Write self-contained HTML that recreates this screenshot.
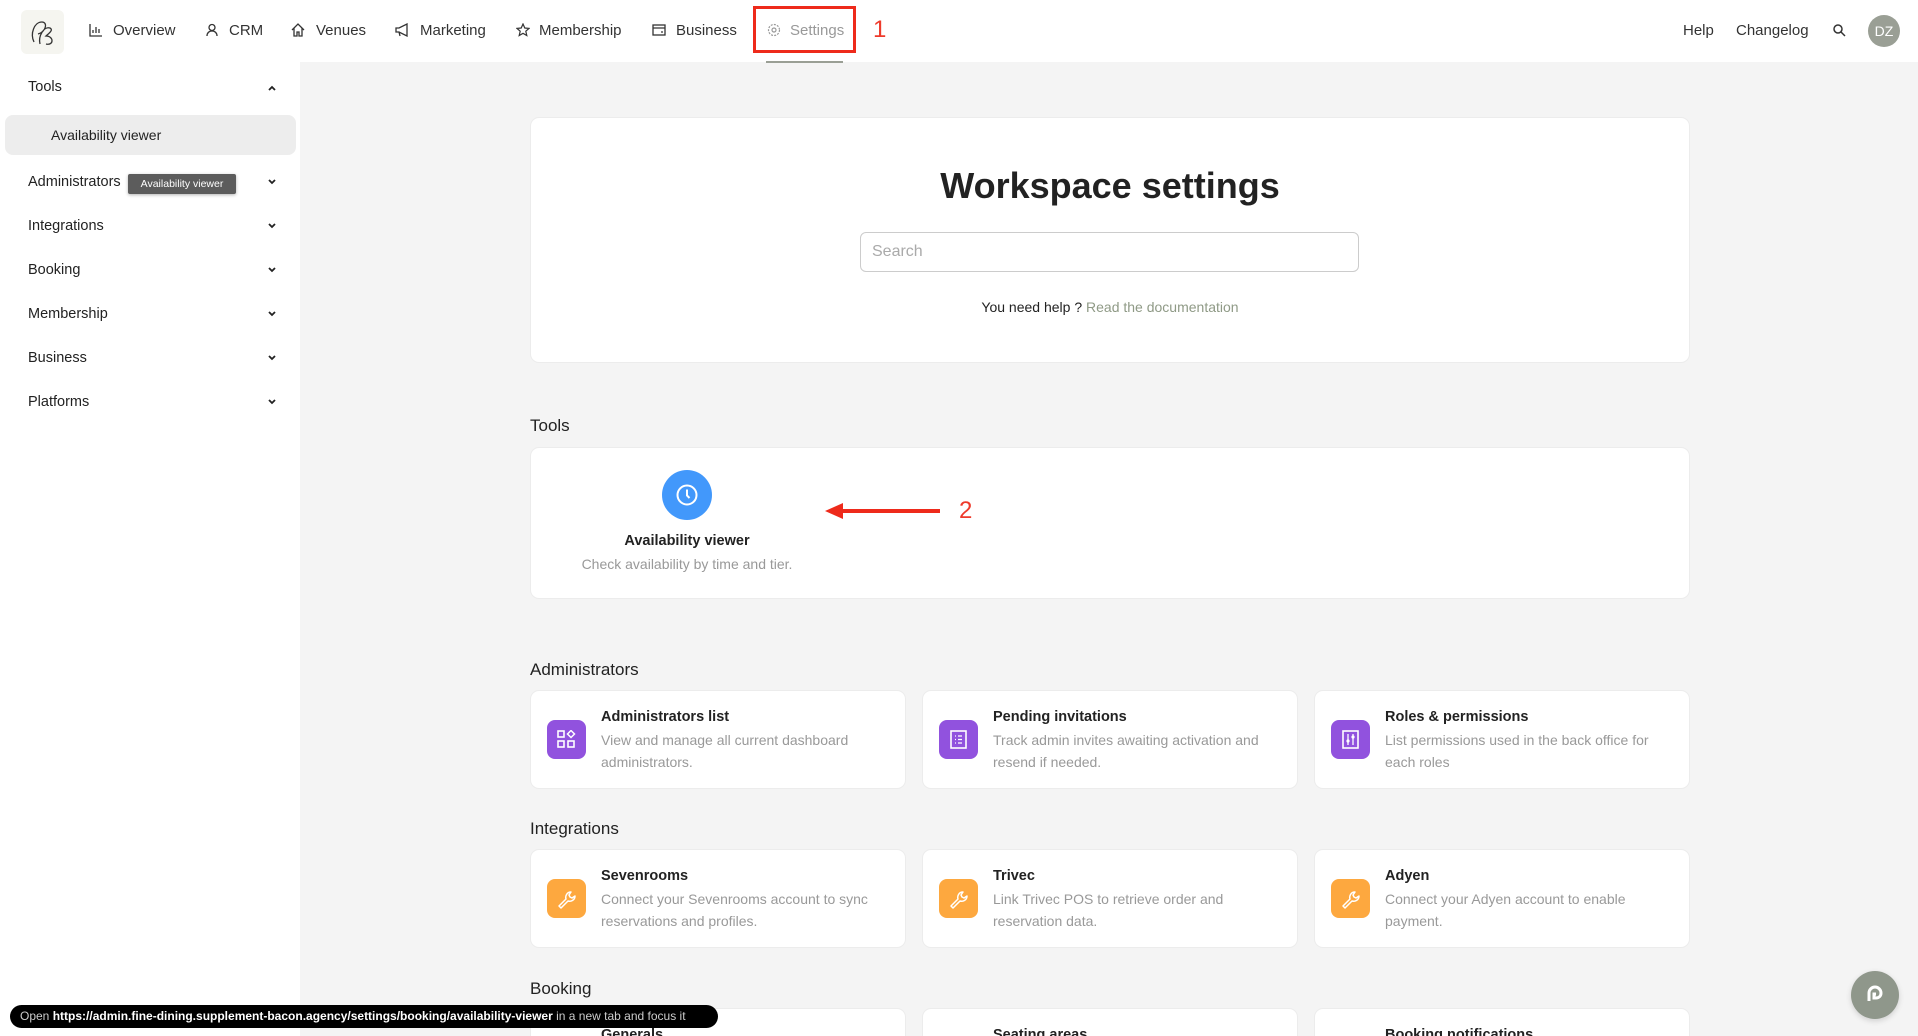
<!DOCTYPE html>
<html style="width:1918px;height:1036px;overflow:hidden"><head><meta charset="utf-8"><style>
*{box-sizing:border-box;margin:0;padding:0}
body{width:1918px;height:1036px;overflow:hidden;background:#f4f4f4;font-family:"Liberation Sans",sans-serif;color:#222;position:relative}
.a{position:absolute}
.top{left:0;top:0;width:1918px;height:62px;background:#fff}
.side{left:0;top:62px;width:300px;height:974px;background:#fff}
.nav{font-size:15px;color:#333;top:22px;white-space:nowrap}
.ni{top:23px;width:14px;height:14px}
.sb{font-size:14.5px;color:#222;left:28px}
.chev{left:267px;width:10px;height:10px}
.card{background:#fff;border-radius:8px;box-shadow:0 0 0 1px #ececec}
.h2{font-size:17px;color:#222;left:530px}
.ic{width:39px;height:39px;border-radius:8px;left:16px;top:29px}
.ct{left:70px;top:18px;font-size:14.5px;font-weight:bold;color:#222;white-space:nowrap}
.cd{left:70px;top:38px;font-size:14px;color:#999;line-height:22px;width:290px}
</style></head><body>
<div class="a top"></div>
<div class="a" style="left:21px;top:10px;width:43px;height:44px;background:#f5f5f0;border-radius:6px"></div>
<svg class="a" style="left:24px;top:14px" width="38" height="36" viewBox="0 0 38 36"><path d="M10 28 C6 20 10 8 18 8 C24 8 22 18 14 20 M16 30 C14 22 20 12 26 14 C30 16 24 20 22 22 C30 22 30 32 22 30" fill="none" stroke="#333" stroke-width="1.3"/></svg>
<svg class="a ni" style="left:89px" viewBox="0 0 14 14"><path d="M1 1v12h12M4 10V7M7 10V4M10 10V6" stroke="#333" fill="none" stroke-width="1.3"/></svg>
<div class="a nav" style="left:113px">Overview</div>
<svg class="a ni" style="left:205px" viewBox="0 0 14 14"><circle cx="7" cy="4.5" r="3" stroke="#333" fill="none" stroke-width="1.3"/><path d="M2 13c0-3 2-5 5-5s5 2 5 5" stroke="#333" fill="none" stroke-width="1.3"/></svg>
<div class="a nav" style="left:229px">CRM</div>
<svg class="a ni" style="left:291px" viewBox="0 0 14 14"><path d="M1 7L7 1l6 6M3 5v8h3V9h2v4h3V5" stroke="#333" fill="none" stroke-width="1.3"/></svg>
<div class="a nav" style="left:316px">Venues</div>
<svg class="a ni" style="left:395px" viewBox="0 0 14 14"><path d="M1 5h3l8-4v12L4 9H1zM4 9l1 4" stroke="#333" fill="none" stroke-width="1.3"/></svg>
<div class="a nav" style="left:420px">Marketing</div>
<svg class="a ni" style="left:516px" viewBox="0 0 14 14"><path d="M7 1l1.8 4 4.2.4-3.2 2.8 1 4.3L7 10.3 3.2 12.5l1-4.3L1 5.4 5.2 5z" stroke="#333" fill="none" stroke-width="1.2"/></svg>
<div class="a nav" style="left:539px">Membership</div>
<svg class="a ni" style="left:652px" viewBox="0 0 14 14"><rect x="1" y="2" width="12" height="10" stroke="#333" fill="none" stroke-width="1.3"/><path d="M1 5h12M9 9h2" stroke="#333" stroke-width="1.3"/></svg>
<div class="a nav" style="left:676px">Business</div>
<svg class="a ni" style="left:767px" viewBox="0 0 14 14"><circle cx="7" cy="7" r="2" stroke="#999" fill="none" stroke-width="1.2"/><circle cx="7" cy="7" r="5.5" stroke="#999" fill="none" stroke-width="1.2" stroke-dasharray="2 1.2"/></svg>
<div class="a nav" style="left:790px;color:#999">Settings</div>
<div class="a" style="left:753px;top:6px;width:103px;height:47px;border:3px solid #ee2a1b"></div>
<div class="a" style="left:873px;top:16px;font-size:24px;color:#ee3a2b">1</div>
<div class="a" style="left:766px;top:61px;width:77px;height:2px;background:#9a9f95"></div>
<div class="a nav" style="left:1683px">Help</div>
<div class="a nav" style="left:1736px">Changelog</div>
<svg class="a ni" style="left:1832px" viewBox="0 0 14 14"><circle cx="6" cy="6" r="4" stroke="#333" fill="none" stroke-width="1.5"/><path d="M9 9l4 4" stroke="#333" stroke-width="1.5"/></svg>
<div class="a" style="left:1868px;top:15px;width:32px;height:32px;border-radius:50%;background:#9a9f95;color:#fff;font-size:14px;text-align:center;line-height:32px">DZ</div>
<div class="a side"></div>
<div class="a sb" style="top:79px">Tools</div>
<svg class="a chev" style="top:83px" viewBox="0 0 10 10"><path d="M2 7l3-3 3 3" stroke="#222" fill="none" stroke-width="1.8"/></svg>
<div class="a" style="left:5px;top:115px;width:291px;height:40px;background:#ededed;border-radius:8px"></div>
<div class="a sb" style="left:51px;top:127px;font-size:14px">Availability viewer</div>
<div class="a sb" style="top:174px">Administrators</div>
<div class="a" style="left:128px;top:174px;width:108px;height:20px;background:#5c5c5c;border-radius:2px;color:#fff;font-size:10.5px;text-align:center;line-height:20px;box-shadow:0 1px 3px rgba(0,0,0,.3)">Availability viewer</div>
<svg class="a chev" style="top:177px" viewBox="0 0 10 10"><path d="M2 3l3 3 3-3" stroke="#222" fill="none" stroke-width="1.8"/></svg>
<div class="a sb" style="top:218px">Integrations</div>
<svg class="a chev" style="top:221px" viewBox="0 0 10 10"><path d="M2 3l3 3 3-3" stroke="#222" fill="none" stroke-width="1.8"/></svg>
<div class="a sb" style="top:262px">Booking</div>
<svg class="a chev" style="top:265px" viewBox="0 0 10 10"><path d="M2 3l3 3 3-3" stroke="#222" fill="none" stroke-width="1.8"/></svg>
<div class="a sb" style="top:306px">Membership</div>
<svg class="a chev" style="top:309px" viewBox="0 0 10 10"><path d="M2 3l3 3 3-3" stroke="#222" fill="none" stroke-width="1.8"/></svg>
<div class="a sb" style="top:350px">Business</div>
<svg class="a chev" style="top:353px" viewBox="0 0 10 10"><path d="M2 3l3 3 3-3" stroke="#222" fill="none" stroke-width="1.8"/></svg>
<div class="a sb" style="top:394px">Platforms</div>
<svg class="a chev" style="top:397px" viewBox="0 0 10 10"><path d="M2 3l3 3 3-3" stroke="#222" fill="none" stroke-width="1.8"/></svg>
<div class="a card" style="left:531px;top:118px;width:1158px;height:244px"></div>
<div class="a" style="left:531px;width:1158px;top:165px;text-align:center;font-size:36px;font-weight:bold;color:#222">Workspace settings</div>
<div class="a" style="left:860px;top:232px;width:499px;height:40px;border:1px solid #ccc;border-radius:6px;background:#fff;font-size:16px;color:#aaa;padding:10px 11px">Search</div>
<div class="a" style="left:531px;width:1158px;top:299px;text-align:center;font-size:14px;color:#222">You need help ? <span style="color:#8f9a86">Read the documentation</span></div>
<div class="a h2" style="top:416px">Tools</div>
<div class="a card" style="left:531px;top:448px;width:1158px;height:150px"></div>
<div class="a" style="left:662px;top:470px;width:50px;height:50px;border-radius:50%;background:#4298fb"></div>
<svg class="a" style="left:674px;top:482px" width="26" height="26" viewBox="0 0 26 26"><circle cx="13" cy="13" r="9.5" stroke="#fff" fill="none" stroke-width="2"/><path d="M13 7.5V13.5l2.5 2.5" stroke="#fff" fill="none" stroke-width="2"/></svg>
<div class="a" style="left:537px;width:300px;top:533px;text-align:center;font-size:14.5px;font-weight:bold">Availability viewer</div>
<div class="a" style="left:537px;width:300px;top:556px;text-align:center;font-size:14px;color:#999">Check availability by time and tier.</div>
<div class="a" style="left:840px;top:509px;width:100px;height:4px;background:#ee2a1b"></div>
<div class="a" style="left:825px;top:503px;width:0;height:0;border-top:8px solid transparent;border-bottom:8px solid transparent;border-right:18px solid #ee2a1b"></div>
<div class="a" style="left:959px;top:497px;font-size:24px;color:#ee3a2b">2</div>
<div class="a h2" style="top:660px">Administrators</div>
<div class="a card" style="left:531px;top:691px;width:374px;height:97px">
<div class="a ic" style="background:#9152de"></div><svg class="a" style="left:26px;top:39px" width="19" height="19" viewBox="0 0 19 19"><rect x="1" y="1" width="6" height="6" stroke="#fff" fill="none" stroke-width="1.6"/><rect x="1" y="11" width="6" height="6" stroke="#fff" fill="none" stroke-width="1.6"/><rect x="11" y="11" width="6" height="6" stroke="#fff" fill="none" stroke-width="1.6"/><path d="M14 0.5l3.5 3.5-3.5 3.5-3.5-3.5z" stroke="#fff" fill="none" stroke-width="1.5"/></svg>
<div class="a ct">Administrators list</div><div class="a cd">View and manage all current dashboard administrators.</div></div>
<div class="a card" style="left:923px;top:691px;width:374px;height:97px">
<div class="a ic" style="background:#9152de"></div><svg class="a" style="left:26px;top:39px" width="19" height="19" viewBox="0 0 19 19"><rect x="2" y="1" width="15" height="17" stroke="#fff" fill="none" stroke-width="1.6"/><path d="M6 6h1M6 9.5h1M6 13h1M9 6h4M9 9.5h4M9 13h4" stroke="#fff" stroke-width="1.3"/></svg>
<div class="a ct">Pending invitations</div><div class="a cd">Track admin invites awaiting activation and resend if needed.</div></div>
<div class="a card" style="left:1315px;top:691px;width:374px;height:97px">
<div class="a ic" style="background:#9152de"></div><svg class="a" style="left:26px;top:39px" width="19" height="19" viewBox="0 0 19 19"><rect x="2" y="1" width="15" height="17" stroke="#fff" fill="none" stroke-width="1.6"/><path d="M7 4v11M12 4v11" stroke="#fff" stroke-width="1.3"/><circle cx="7" cy="11" r="1.6" fill="#fff"/><circle cx="12" cy="7" r="1.6" fill="#fff"/></svg>
<div class="a ct">Roles &amp; permissions</div><div class="a cd">List permissions used in the back office for each roles</div></div>
<div class="a h2" style="top:819px">Integrations</div>
<div class="a card" style="left:531px;top:850px;width:374px;height:97px">
<div class="a ic" style="background:#fda83f"></div><svg class="a" style="left:25px;top:38px" width="21" height="21" viewBox="0 0 21 21"><path d="M3 18l7-7c-1-3 1-7 5-7l-2 3 1 2 2 1 3-2c0 4-4 6-7 5l-7 7z" stroke="#fff" fill="none" stroke-width="1.5" stroke-linejoin="round"/></svg>
<div class="a ct">Sevenrooms</div><div class="a cd">Connect your Sevenrooms account to sync reservations and profiles.</div></div>
<div class="a card" style="left:923px;top:850px;width:374px;height:97px">
<div class="a ic" style="background:#fda83f"></div><svg class="a" style="left:25px;top:38px" width="21" height="21" viewBox="0 0 21 21"><path d="M3 18l7-7c-1-3 1-7 5-7l-2 3 1 2 2 1 3-2c0 4-4 6-7 5l-7 7z" stroke="#fff" fill="none" stroke-width="1.5" stroke-linejoin="round"/></svg>
<div class="a ct">Trivec</div><div class="a cd">Link Trivec POS to retrieve order and reservation data.</div></div>
<div class="a card" style="left:1315px;top:850px;width:374px;height:97px">
<div class="a ic" style="background:#fda83f"></div><svg class="a" style="left:25px;top:38px" width="21" height="21" viewBox="0 0 21 21"><path d="M3 18l7-7c-1-3 1-7 5-7l-2 3 1 2 2 1 3-2c0 4-4 6-7 5l-7 7z" stroke="#fff" fill="none" stroke-width="1.5" stroke-linejoin="round"/></svg>
<div class="a ct">Adyen</div><div class="a cd">Connect your Adyen account to enable payment.</div></div>
<div class="a h2" style="top:979px">Booking</div>
<div class="a card" style="left:531px;top:1009px;width:374px;height:27px;overflow:hidden;border-radius:8px 8px 0 0"><div class="a ct" style="top:18px">Generals</div></div>
<div class="a card" style="left:923px;top:1009px;width:374px;height:27px;overflow:hidden;border-radius:8px 8px 0 0"><div class="a ct" style="top:18px">Seating areas</div></div>
<div class="a card" style="left:1315px;top:1009px;width:374px;height:27px;overflow:hidden;border-radius:8px 8px 0 0"><div class="a ct" style="top:18px">Booking notifications</div></div>
<div class="a" style="left:10px;top:1005px;width:708px;height:23px;background:#000;border-radius:12px;color:#ccc;font-size:12px;line-height:23px;padding-left:10px;white-space:nowrap">Open <b style="color:#fff">https://admin.fine-dining.supplement-bacon.agency/settings/booking/availability-viewer</b> in a new tab and focus it</div>
<div class="a" style="left:1851px;top:971px;width:48px;height:48px;border-radius:50%;background:#8f978b;box-shadow:0 2px 6px rgba(0,0,0,.15)"></div>
<svg class="a" style="left:1863px;top:983px" width="24" height="24" viewBox="0 0 24 24"><path d="M6 18V10a6 6 0 0 1 12 0c0 3-2 5-5 5h-2v-4h2" stroke="#fff" fill="none" stroke-width="3"/></svg>
</body></html>
